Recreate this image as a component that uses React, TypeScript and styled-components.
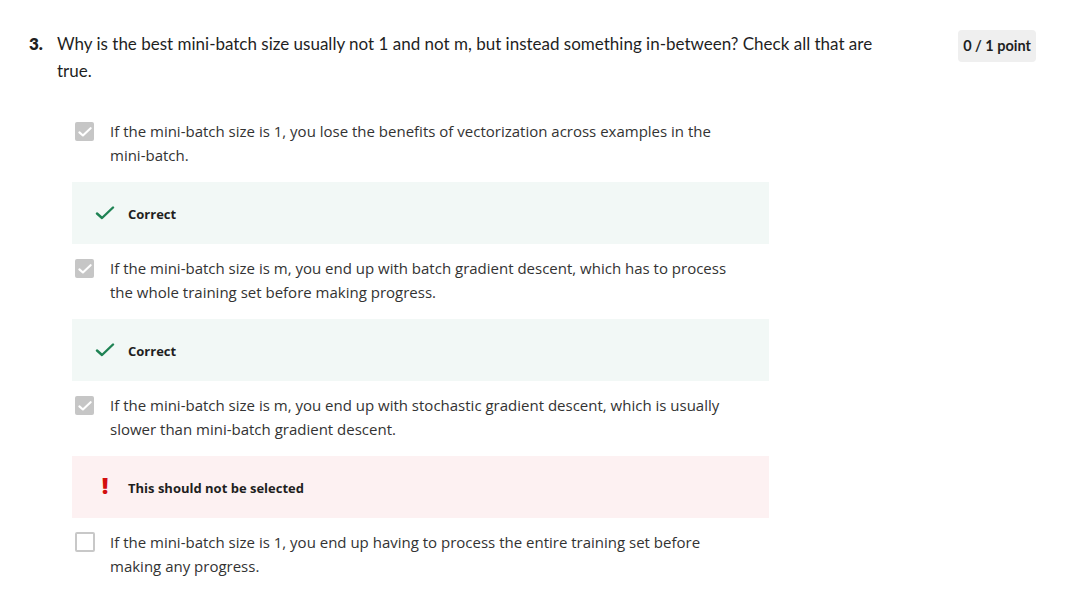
import React from "react";
import styled, { createGlobalStyle } from "styled-components";

const Global = createGlobalStyle`
  html, body { margin: 0; padding: 0; background: #ffffff; }
  body { font-family: "Open Sans", "Noto Sans", sans-serif; color: #1f1f1f; }
`;

const Page = styled.div`
  padding: 30px 36px 0 29px;
  display: flex;
  flex-direction: column;
`;

const Header = styled.div`
  display: flex;
  align-items: flex-start;
  gap: 10px;
`;

const Num = styled.div`
  font-family: "Lato", sans-serif;
  font-weight: 800;
  font-size: 17px;
  line-height: 27px;
  width: 18px;
  color: #1f1f1f;
`;

const QText = styled.div`
  flex: 1;
  font-family: "Lato", sans-serif;
  font-size: 17px;
  line-height: 27px;
  color: #1f1f1f;
  max-width: 830px;
`;

const Badge = styled.div`
  margin-left: auto;
  background: #efefef;
  border-radius: 4px;
  padding: 6px 5px 6px 5px;
  font-family: "Lato", sans-serif;
  font-weight: 700;
  font-size: 14.5px;
  line-height: 20px;
  color: #1f1f1f;
  white-space: nowrap;
`;

const Options = styled.div`
  margin-top: 35px;
  margin-left: 43px;
  width: 697px;
  display: flex;
  flex-direction: column;
`;

const Option = styled.div`
  display: flex;
  align-items: flex-start;
  gap: 17px;
  padding-left: 3px;
`;

const Box = styled.div<{ $checked: boolean }>`
  flex: none;
  width: 19px;
  height: 19px;
  margin-top: 3px;
  box-sizing: border-box;
  border-radius: 2px;
  display: flex;
  align-items: center;
  justify-content: center;
  background: ${(p) => (p.$checked ? "#c6c6c6" : "#ffffff")};
  border: ${(p) => (p.$checked ? "none" : "2px solid #c8c8c8")};
  ${(p) => (!p.$checked ? "width: 20px; height: 20px; margin-top: 2px; margin-right: -2px;" : "margin-right: -1px;")}
`;

const OptText = styled.div`
  font-family: "Open Sans", sans-serif;
  font-size: 15px;
  line-height: 24px;
  color: #333333;
  max-width: 622px;
`;

const Feedback = styled.div<{ $ok: boolean }>`
  margin-top: 15px;
  margin-bottom: 12px;
  height: 62px;
  display: flex;
  align-items: center;
  gap: 13px;
  padding-left: 23px;
  background: ${(p) => (p.$ok ? "#f2f8f6" : "#fdf1f2")};
`;

const FbIcon = styled.div`
  width: 20px;
  display: flex;
  justify-content: center;
  align-items: center;
`;

const Bang = styled.span`
  font-family: "Open Sans", sans-serif;
  font-weight: 800;
  font-size: 23px;
  line-height: 22px;
  color: #d30f0f;
  margin-top: -4px;
`;

const FbText = styled.div`
  font-family: "Open Sans", sans-serif;
  font-weight: 700;
  font-size: 13px;
  color: #1f1f1f;
  margin-top: 2px;
`;

const Tick = ({ color, w, h, sw = 2.4 }: { color: string; w: number; h: number; sw?: number }) => (
  <svg width={w} height={h} viewBox="0 0 20 14" fill="none">
    <path d="M2 7.5 L7 12 L18 1.5" stroke={color} strokeWidth={sw} strokeLinecap="round" strokeLinejoin="round" />
  </svg>
);

type Item = { text: string; checked: boolean; fb?: "ok" | "bad" };

const items: Item[] = [
  { text: "If the mini-batch size is 1, you lose the benefits of vectorization across examples in the mini-batch.", checked: true, fb: "ok" },
  { text: "If the mini-batch size is m, you end up with batch gradient descent, which has to process the whole training set before making progress.", checked: true, fb: "ok" },
  { text: "If the mini-batch size is m, you end up with stochastic gradient descent, which is usually slower than mini-batch gradient descent.", checked: true, fb: "bad" },
  { text: "If the mini-batch size is 1, you end up having to process the entire training set before making any progress.", checked: false },
];

export default function App() {
  return (
    <>
      <Global />
      <Page>
        <Header>
          <Num>3.</Num>
          <QText>
            Why is the best mini-batch size usually not 1 and not m, but instead something in-between? Check all that are true.
          </QText>
          <Badge>0 / 1 point</Badge>
        </Header>
        <Options>
          {items.map((it, i) => (
            <React.Fragment key={i}>
              <Option>
                <Box $checked={it.checked}>{it.checked && <Tick color="#ffffff" w={14} h={10} sw={3} />}</Box>
                <OptText>{it.text}</OptText>
              </Option>
              {it.fb === "ok" && (
                <Feedback $ok>
                  <FbIcon>
                    <Tick color="#1f8354" w={20} h={14} />
                  </FbIcon>
                  <FbText>Correct</FbText>
                </Feedback>
              )}
              {it.fb === "bad" && (
                <Feedback $ok={false}>
                  <FbIcon>
                    <Bang>!</Bang>
                  </FbIcon>
                  <FbText>This should not be selected</FbText>
                </Feedback>
              )}
            </React.Fragment>
          ))}
        </Options>
      </Page>
    </>
  );
}
